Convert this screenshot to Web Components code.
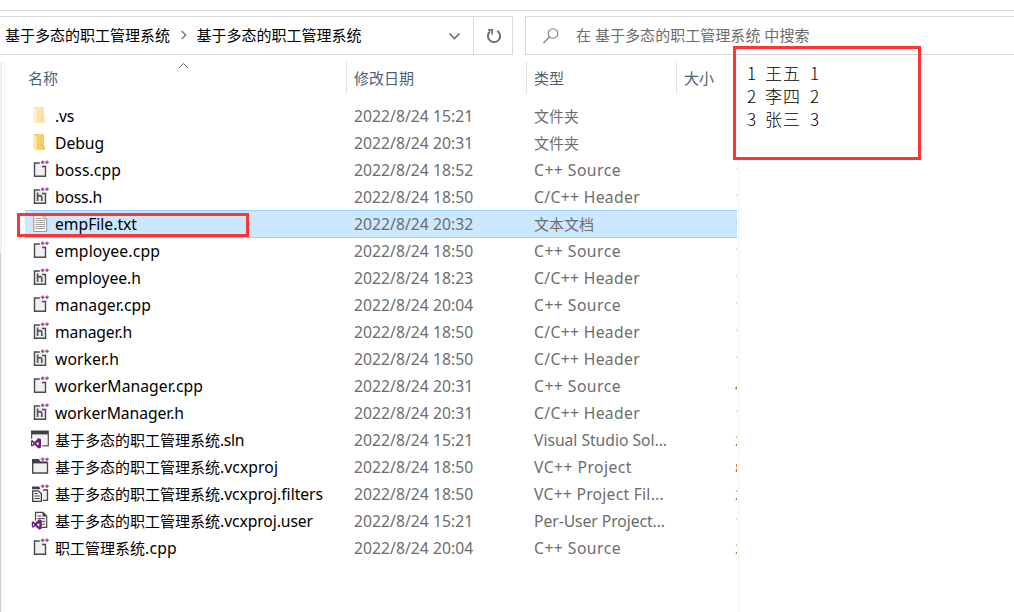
<!DOCTYPE html>
<html lang="zh-CN">
<head>
<meta charset="utf-8">
<title>文件资源管理器</title>
<style>
html,body{margin:0;width:1014px;height:612px;overflow:hidden;background:#fff}
body{font:15px/20px "Noto Sans","Noto Sans CJK SC",sans-serif}
</style>
</head>
<body>
<explorer-window></explorer-window>
<script>
const define = (name, html, setup) => customElements.define(name, class extends HTMLElement {
  connectedCallback() {
    if (this.shadowRoot) return;
    const t = document.createElement('template');
    t.innerHTML = html;
    this.attachShadow({ mode: 'open' }).appendChild(t.content.cloneNode(true));
    if (setup) setup.call(this, this.shadowRoot);
  }
});

/* A label that spreads its letters over a given width; Latin text is set slightly larger. */
define('fit-text', `<style>:host{display:block;white-space:pre}span{display:inline-block}:host([latin]){font-size:15.7px}</style><span><slot></slot></span>`, function (root) {
  const s = root.querySelector('span'), w = +this.getAttribute('w');
  if (!/[\u4e00-\u9fff]/.test(this.textContent)) this.setAttribute('latin', '');
  if (!w) return;
  const n = [...this.textContent].length;
  s.style.letterSpacing = (w - s.getBoundingClientRect().width) / n + 'px';
});

const plus = `<path d="M10.8 6.2h3.6M12.6 4.4V8M15.2 6.2h3.6M17 4.4V8" stroke="#9b4f96" stroke-width="1.4" fill="none"/>`;
const page = `<path d="M4.5 7H15.5V20.3H4.5Z" fill="#f0eff1"/><path d="M9.8 7H4.5V20.3H15.5V10.5H12" fill="none" stroke="#4a4a4c" stroke-width="1.4"/>`;
const vs = `<path fill="#68217a" fill-rule="evenodd" d="M1 14.7l1.2-.6 2.4 1.8 3.8-3.8 2.6 1.1v8.2l-2.6 1.1-3.8-3.8-2.4 1.8-1.2-.6zM2.2 16.1v3l1.4-1.5zM6 17.6l2.5 1.9v-3.8z"/>`;
const folder = `<path d="M6 5H14V16.5L15 17.5V20.8H6Z" fill="url(#g)"/><path d="M3.2 5L7 7.4V22L3.2 20.3Z" fill="#fde9a2"/><path d="M3.2 5H7V7.4Z" fill="#f0c75c"/><path d="M7.2 7.4V21.5" stroke="#edc55b" stroke-width=".6"/><defs><linearGradient id="g" x1="0" y1="0" x2="1" y2="1"><stop stop-color="#f6d77b"/><stop offset="1" stop-color="#f1c750"/></linearGradient></defs>`;
const icons = {
  faded: `<g opacity=".55">${folder}</g>`,
  folder,
  cpp: page + plus,
  h: page + `<path d="M7.6 9.5V18M7.6 14Q8.2 12.6 10 12.7Q11.8 12.8 11.8 14.6V18" fill="none" stroke="#555557" stroke-width="1.7"/>` + plus,
  txt: `<path d="M3.8 5.5H13.2L16.7 9V21.5H3.8Z" fill="#fafafa" stroke="#8c8c8c" stroke-width=".9"/><path d="M13 5.5V9H16.7" fill="none" stroke="#999" stroke-width=".8"/><path d="M5.5 8.5H11.5M5.5 10.5H15M5.5 12.5H15M5.5 14.5H15M5.5 16.5H15M5.5 18.5H15" stroke="#a3a3a3" stroke-width="1"/>`,
  sln: `<path d="M1.6 5H18.3V19.8H1.6Z" fill="#f0eff1"/><path d="M1 4.5H18.9V8.4H1Z" fill="#424244"/><path d="M1.6 8V12.8M18.3 8V19.8H12.5" fill="none" stroke="#555557" stroke-width="1.2"/><path d="M0 13H11.6V23H0Z" fill="#fff"/>` + vs,
  proj: `<path d="M2.7 9.5H17.5V20H2.7Z" fill="#f0eff1" stroke="#4a4a4c" stroke-width="1.4"/><path d="M2 6H8.8L10.4 8.5H17V10.3H2Z" fill="#424244"/>` + plus,
  filters: `<path d="M2 6.4H9.2L10.5 9.3H2Z" fill="#424244"/><path d="M13 10H17.5V20.4H12.8" fill="#f0eff1" stroke="#4a4a4c" stroke-width="1.3"/><path d="M2.7 10.8H8.4L11.4 13.8V21.4H2.7Z" fill="#f5f5f5" stroke="#424244" stroke-width="1.3"/><path d="M4.5 13.6H7.6M4.5 16H9.7M4.5 18.5H9.7" stroke="#424244"/>` + plus,
  user: `<path d="M5.5 5.4H13L16.7 9V20.3H5.5Z" fill="#f0eff1" stroke="#4a4a4c" stroke-width="1.2"/><path d="M12.5 5L17 9.5H12.5Z" fill="#424244"/><path d="M7.5 9H11M7.5 11.6H15M12 14.4H15M12 17.2H15" stroke="#555557"/><path d="M1 13.3H11.8V22.5H1Z" fill="#fff" opacity=".8"/><g transform="translate(.8 .2)">${vs}</g>`
};
define('file-icon', `<style>:host{display:block;width:20px;height:27px}svg{display:block}</style><svg width="20" height="27" viewBox="0 0 20 27"></svg>`, function (root) {
  root.querySelector('svg').innerHTML = icons[this.getAttribute('kind')];
});

define('address-bar', `<style>
:host{display:flex;height:39px;box-sizing:border-box;color:#000}
.path{display:flex;align-items:center;box-sizing:border-box;width:474px;padding-left:5px;border:solid #d9d9d9;border-width:1px 1px 1px 0}
.path fit-text{width:165px}
fit-text{padding-bottom:2px}
.sep{width:26.5px;height:20px}
.drop{margin:1px 0 0 86.5px}
.reload{display:grid;place-items:center;box-sizing:border-box;width:39px;padding-left:2px;border:solid #d9d9d9;border-width:1px 1px 1px 0}
.search{display:flex;align-items:center;box-sizing:border-box;flex:1;margin-left:12px;border:solid #d9d9d9;border-width:1px 0 1px 1px;color:#6d6d6d}
.search svg{margin:0 16px 0 15px}
svg{display:block;fill:none}
</style>
<div class="path"><fit-text w="165">基于多态的职工管理系统</fit-text>
<svg class="sep" viewBox="0 0 26 20"><path d="M11.5 5L15.5 9L11.5 13" stroke="#777" stroke-width="1.4"/></svg>
<fit-text w="165">基于多态的职工管理系统</fit-text>
<svg class="drop" width="13" height="10"><path d="M1.5 2.5L6.5 7.5L11.5 2.5" stroke="#6f6f6f" stroke-width="1.7"/></svg></div>
<div class="reload"><svg width="18" height="18"><path d="M12.2 3.8A6.1 6.1 0 1 1 5.2 4.3" stroke="#707070" stroke-width="2"/><path d="M3 2.9H7.2V7.5" stroke="#707070" stroke-width="1.7"/></svg></div>
<div class="search"><svg width="19" height="18"><circle cx="12" cy="6.5" r="4.8" stroke="#808080" stroke-width="1.1"/><path d="M8.5 10L2.5 16" stroke="#808080" stroke-width="1.2"/></svg><fit-text w="233.5">在 基于多态的职工管理系统 中搜索</fit-text></div>`);

define('column-heads', `<style>
:host{display:flex;height:32px;color:#4c607a;line-height:32px}
div{box-sizing:border-box;border-right:1px solid #e3e3e3;padding-left:7px}
.n{width:347px;padding-left:28px;display:flex}
.n svg{margin:0 0 0 120px}
.t{width:180px}.k{width:150px}.s{border:0}
</style><div class="n"><span>名称</span><svg width="12" height="8" fill="none"><path d="M1 6L5.5 1.5L10 6" stroke="#666"/></svg></div><div class="t">修改日期</div><div class="k">类型</div><div class="s">大小</div>`);

define('file-row', `<style>
:host{display:grid;grid-template-columns:5px 25px 299px 180px 201px 2px;height:27px;width:712px;margin-left:25px;line-height:29px;color:#6d6d6d;overflow:hidden}
:host([selected]){height:28px;margin-bottom:-1px;background:#cce8ff;box-shadow:inset 0 1px #99d1ff,inset 0 -1px #99d1ff}
.size{overflow:hidden;height:27px;color:#9b6b46}
.size span{display:block;width:9px}
</style><i></i><file-icon></file-icon><slot name="name"></slot><slot name="date"></slot><slot name="type"></slot><div class="size"><span></span></div>`, function (root) {
  const old = root.querySelector('file-icon'), ic = document.createElement('file-icon');
  ic.setAttribute('kind', this.getAttribute('icon'));
  old.replaceWith(ic);
  root.querySelector('.size span').textContent = this.getAttribute('size') || '';
});

const S = ['C++ Source', 87], H = ['C/C++ Header', 106], F = ['文件夹', 45];
const files = [
  ['faded', '.vs', 19, '15:21', F, ''],
  ['folder', 'Debug', 49, '20:31', F, ''],
  ['cpp', 'boss.cpp', 66, '18:52', S, '1'],
  ['h', 'boss.h', 47, '18:50', H, '1'],
  ['txt', 'empFile.txt', 82, '20:32', ['文本文档', 60], '1'],
  ['cpp', 'employee.cpp', 105, '18:50', S, '1'],
  ['h', 'employee.h', 86, '18:23', H, '1'],
  ['cpp', 'manager.cpp', 96, '20:04', S, '1'],
  ['h', 'manager.h', 77, '18:50', H, '1'],
  ['h', 'worker.h', 64, '18:50', H, '1'],
  ['cpp', 'workerManager.cpp', 148, '20:31', S, '4'],
  ['h', 'workerManager.h', 129, '20:31', H, '1'],
  ['sln', '基于多态的职工管理系统.sln', 189, '15:21', ['Visual Studio Sol...', 133], '2'],
  ['proj', '基于多态的职工管理系统.vcxproj', 223, '18:50', ['VC++ Project', 98], '8'],
  ['filters', '基于多态的职工管理系统.vcxproj.filters', 268, '18:50', ['VC++ Project Fil...', 130], '2'],
  ['user', '基于多态的职工管理系统.vcxproj.user', 258, '15:21', ['Per-User Project...', 131], '1'],
  ['cpp', '职工管理系统.cpp', 122, '20:04', S, '2']
];
/* Chinese stems keep their full advance; only the Latin tail is fitted. */
const nameLabel = (s, w) => {
  const m = s.match(/^([\u4e00-\u9fff]*)(.*)$/);
  return m[1] ? `<span slot="name" style="display:flex;color:#000"><span>${m[1]}</span><fit-text w="${w - 15 * m[1].length}">${m[2]}</fit-text></span>`
    : `<fit-text slot="name" style="color:#000" w="${w}">${s}</fit-text>`;
};
define('file-list', `<style>:host{display:block;padding-top:8px}</style>` + files.map(f =>
  `<file-row icon="${f[0]}" size="${f[5]}"${f[0] === 'txt' ? ' selected' : ''}>${nameLabel(f[1], f[2])}<fit-text slot="date" w="119.3">2022/8/24 ${f[3]}</fit-text><fit-text slot="type" w="${f[4][1]}">${f[4][0]}</fit-text></file-row>`).join(''));

define('note-text', `<style>:host{display:block;box-sizing:border-box;width:275px;border-left:1px solid #f2f2f2;padding:0 0 0 8px;font:300 17px/21px "Noto Sans CJK SC",sans-serif;color:#000}
div{display:flex;height:23px}span{width:18px}b{font-weight:300;width:45px;letter-spacing:1px}</style>
<div><span>1</span><b>王五</b><span>1</span></div><div><span>2</span><b>李四</b><span>2</span></div><div><span>3</span><b>张三</b><span>3</span></div>`);

define('mark-box', `<style>:host{position:absolute;box-sizing:border-box;border:3px solid #fc3636}</style>`);

define('explorer-window', `<style>
:host{display:flex;flex-direction:column;position:relative;width:1014px;height:612px;background:#fff;overflow:hidden}
.top{height:10px;border-bottom:1px solid #d9d9d9;margin-bottom:5px}
.body{display:flex;flex:1;margin-top:7px;min-height:0}
.edge{width:5px;margin-right:-5px;box-sizing:border-box;border-right:1px solid #f3f3f3;background:linear-gradient(#f0f0f0 191px,#cdcdcd 191px) 0 0/1px 100% no-repeat,linear-gradient(#f0f0f0,#f0f0f0) 1px 0/1px 100% no-repeat}
.list{width:738px}
</style>
<div class="top"></div><address-bar></address-bar>
<div class="body"><div class="edge"></div><div class="list"><column-heads></column-heads><file-list></file-list></div><note-text></note-text></div>
<mark-box style="left:17px;top:213px;width:232px;height:24px"></mark-box>
<mark-box style="left:733px;top:46px;width:188px;height:114px"></mark-box>`);
</script>
</body>
</html>
